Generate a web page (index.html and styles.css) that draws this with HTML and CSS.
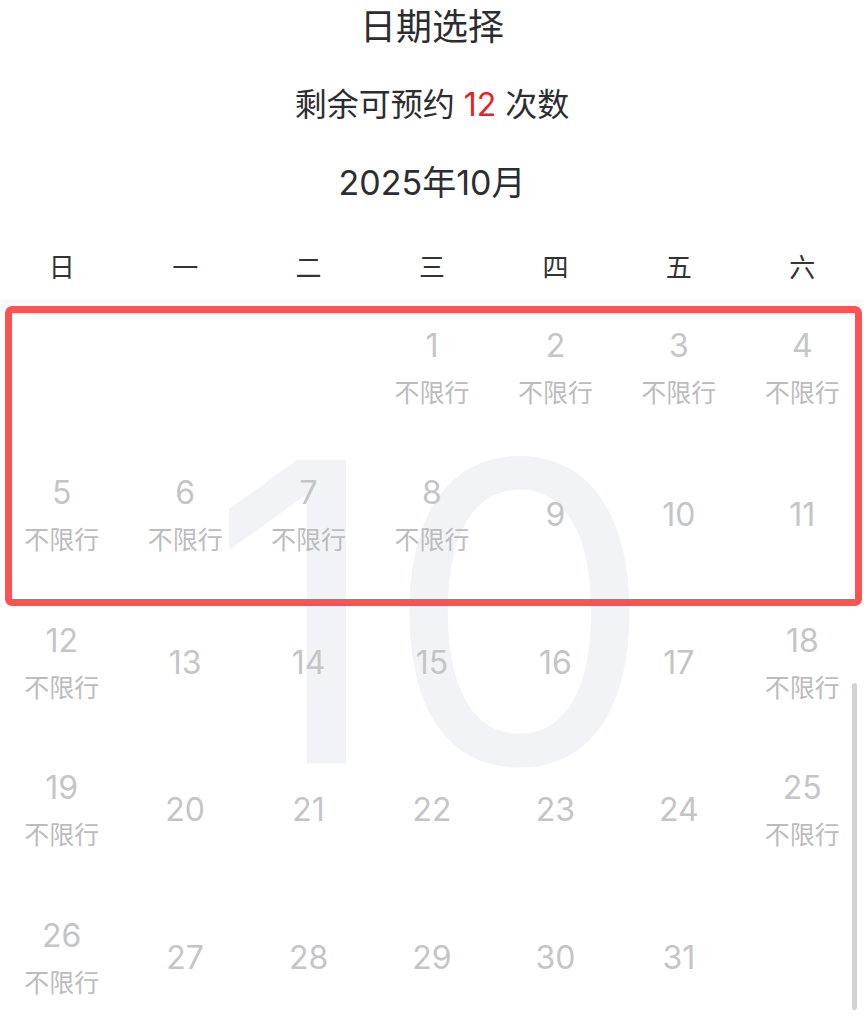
FILE: index.html
```html
<!DOCTYPE html>
<html lang="zh-CN">
<head>
<meta charset="utf-8">
<title>日期选择</title>
<link rel="stylesheet" href="styles.css">
</head>
<body>
<div class="page">
  <header class="head">
    <h1 class="title">日期选择</h1>
    <p class="quota">剩余可预约 <span class="count">12</span> 次数</p>
    <p class="month">2025年10月</p>
  </header>
  <div class="weekdays">
    <span>日</span><span>一</span><span>二</span><span>三</span><span>四</span><span>五</span><span>六</span>
  </div>
  <div class="calendar">
    <div class="watermark" aria-hidden="true">10</div>
    <div class="grid">
      <div class="cell"></div>
      <div class="cell"></div>
      <div class="cell"></div>
      <div class="cell"><span class="num">1</span><span class="tag">不限行</span></div>
      <div class="cell"><span class="num">2</span><span class="tag">不限行</span></div>
      <div class="cell"><span class="num">3</span><span class="tag">不限行</span></div>
      <div class="cell"><span class="num">4</span><span class="tag">不限行</span></div>

      <div class="cell"><span class="num">5</span><span class="tag">不限行</span></div>
      <div class="cell"><span class="num">6</span><span class="tag">不限行</span></div>
      <div class="cell"><span class="num">7</span><span class="tag">不限行</span></div>
      <div class="cell"><span class="num">8</span><span class="tag">不限行</span></div>
      <div class="cell"><span class="num">9</span></div>
      <div class="cell"><span class="num">10</span></div>
      <div class="cell"><span class="num">11</span></div>

      <div class="cell"><span class="num">12</span><span class="tag">不限行</span></div>
      <div class="cell"><span class="num">13</span></div>
      <div class="cell"><span class="num">14</span></div>
      <div class="cell"><span class="num">15</span></div>
      <div class="cell"><span class="num">16</span></div>
      <div class="cell"><span class="num">17</span></div>
      <div class="cell"><span class="num">18</span><span class="tag">不限行</span></div>

      <div class="cell"><span class="num">19</span><span class="tag">不限行</span></div>
      <div class="cell"><span class="num">20</span></div>
      <div class="cell"><span class="num">21</span></div>
      <div class="cell"><span class="num">22</span></div>
      <div class="cell"><span class="num">23</span></div>
      <div class="cell"><span class="num">24</span></div>
      <div class="cell"><span class="num">25</span><span class="tag">不限行</span></div>

      <div class="cell"><span class="num">26</span><span class="tag">不限行</span></div>
      <div class="cell"><span class="num">27</span></div>
      <div class="cell"><span class="num">28</span></div>
      <div class="cell"><span class="num">29</span></div>
      <div class="cell"><span class="num">30</span></div>
      <div class="cell"><span class="num">31</span></div>
      <div class="cell"></div>
    </div>
    <div class="highlight"></div>
    <div class="scrollbar"></div>
  </div>
</div>
</body>
</html>
```

FILE: styles.css
```css
html, body {
  margin: 0;
  padding: 0;
  background: #ffffff;
}
body {
  width: 864px;
  height: 1023px;
  overflow: hidden;
  font-family: Inter, "Noto Sans CJK SC", sans-serif;
  color: #2f3033;
}
.page {
  width: 864px;
}
.head {
  text-align: center;
}
.title {
  margin: 0;
  font-size: 36px;
  font-weight: 400;
  line-height: 54px;
  color: #2b2d30;
}
.quota {
  margin: 27px 0 0;
  font-size: 32px;
  line-height: 48px;
  color: #2b2d30;
}
.count {
  color: #e62222;
}
.month {
  margin: 30px 0 0;
  font-size: 34px;
  line-height: 48px;
  color: #2b2d30;
}
.weekdays {
  display: grid;
  grid-template-columns: repeat(7, 1fr);
  padding: 41px 0 12px;
  line-height: 40px;
  font-size: 26px;
  color: #333333;
  text-align: center;
  box-shadow: 0 3px 5px rgba(0, 0, 0, 0.045);
  position: relative;
  z-index: 1;
}
.calendar {
  position: relative;
  padding-top: 5px;
}
.watermark {
  position: absolute;
  left: 0;
  right: 0;
  top: 94px;
  text-align: center;
  font-size: 430px;
  line-height: 1;
  color: #f2f3f7;
  transform: scaleY(0.97);
  transform-origin: 50% 75%;
  z-index: 0;
}
.grid {
  position: relative;
  z-index: 1;
  display: grid;
  grid-template-columns: repeat(7, 1fr);
  grid-auto-rows: 147.5px;
}
.cell {
  display: flex;
  flex-direction: column;
  align-items: center;
  justify-content: center;
  padding-bottom: 22px;
}
.num {
  font-size: 32px;
  line-height: 36px;
  color: #c5c5c7;
}
.tag {
  margin-top: 14px;
  font-size: 25px;
  line-height: 30px;
  color: #bcbcbe;
}
.highlight {
  position: absolute;
  left: 5px;
  top: 6px;
  width: 843px;
  height: 286px;
  border: 7px solid #fd5252;
  border-radius: 7px;
  z-index: 2;
}
.scrollbar {
  position: absolute;
  left: 852px;
  top: 383px;
  width: 5px;
  height: 327px;
  border-radius: 3px;
  background: #d2d2d4;
  z-index: 2;
}
```
